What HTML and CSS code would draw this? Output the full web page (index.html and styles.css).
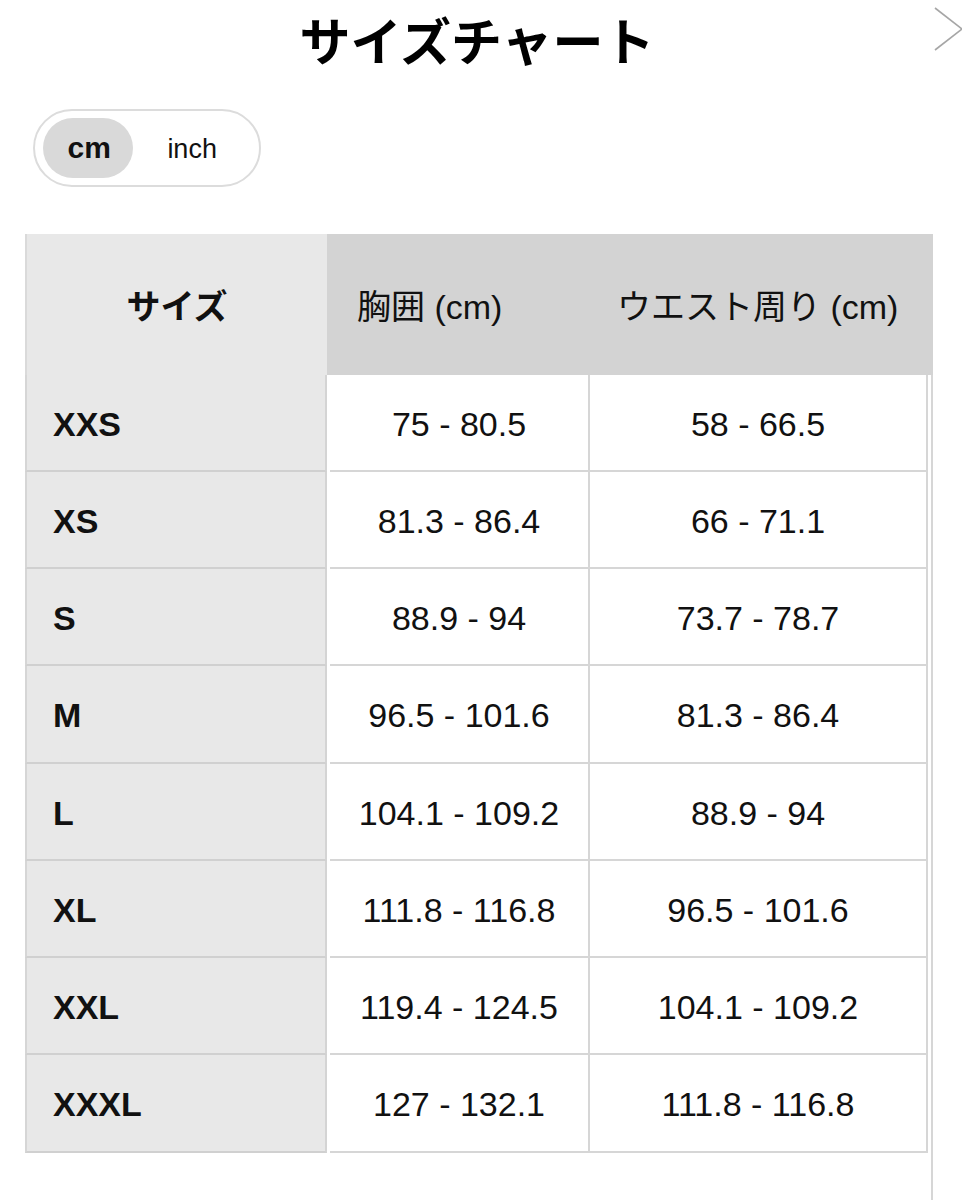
FILE: index.html
```html
<!DOCTYPE html>
<html lang="ja">
<head>
<meta charset="utf-8">
<title>サイズチャート</title>
<link rel="stylesheet" href="styles.css">
</head>
<body>
<div class="page">
  <h1 class="title">サイズチャート</h1>
  <svg class="close" width="56" height="44" viewBox="0 0 56 44" aria-label="閉じる">
    <line x1="1" y1="1" x2="55" y2="43" stroke="#a6a6a6" stroke-width="1.6"/>
    <line x1="1" y1="43" x2="55" y2="1" stroke="#a6a6a6" stroke-width="1.6"/>
  </svg>
  <div class="toggle">
    <span class="opt opt-cm active">cm</span>
    <span class="opt opt-inch">inch</span>
  </div>
  <div class="chart">
    <div class="head">
      <div class="h h-size">サイズ</div>
      <div class="h h-chest">胸囲 (cm)</div>
      <div class="h h-waist">ウエスト周り (cm)</div>
    </div>
    <div class="body">
      <div class="row"><div class="c c-size">XXS</div><div class="c c-chest">75 - 80.5</div><div class="c c-waist">58 - 66.5</div></div>
      <div class="row"><div class="c c-size">XS</div><div class="c c-chest">81.3 - 86.4</div><div class="c c-waist">66 - 71.1</div></div>
      <div class="row"><div class="c c-size">S</div><div class="c c-chest">88.9 - 94</div><div class="c c-waist">73.7 - 78.7</div></div>
      <div class="row"><div class="c c-size">M</div><div class="c c-chest">96.5 - 101.6</div><div class="c c-waist">81.3 - 86.4</div></div>
      <div class="row"><div class="c c-size">L</div><div class="c c-chest">104.1 - 109.2</div><div class="c c-waist">88.9 - 94</div></div>
      <div class="row"><div class="c c-size">XL</div><div class="c c-chest">111.8 - 116.8</div><div class="c c-waist">96.5 - 101.6</div></div>
      <div class="row"><div class="c c-size">XXL</div><div class="c c-chest">119.4 - 124.5</div><div class="c c-waist">104.1 - 109.2</div></div>
      <div class="row"><div class="c c-size">XXXL</div><div class="c c-chest">127 - 132.1</div><div class="c c-waist">111.8 - 116.8</div></div>
    </div>
  </div>
</div>
</body>
</html>
```
FILE: styles.css
```css
html, body {
  margin: 0;
  padding: 0;
  background: #fff;
  overflow: hidden;
}
body {
  font-family: "Liberation Sans", "Noto Sans CJK JP", sans-serif;
  color: #111;
}
.page {
  position: relative;
  width: 962px;
  height: 1200px;
  overflow: hidden;
}
.title {
  margin: 18px 8px 0 0;
  font-size: 51px;
  line-height: 51px;
  font-weight: 700;
  text-align: center;
  color: #000;
}
.close {
  position: absolute;
  left: 934px;
  top: 7px;
}
.toggle {
  display: flex;
  box-sizing: border-box;
  width: 228px;
  height: 78px;
  margin: 40px 0 0 33px;
  padding: 7px 8px;
  border: 2px solid #dcdcdc;
  border-radius: 39px;
}
.opt {
  display: flex;
  align-items: center;
  justify-content: center;
  height: 60px;
  border-radius: 30px;
  color: #111;
}
.opt-cm {
  width: 92px;
  font-size: 30px;
  font-weight: 700;
  padding-left: 2px;
  box-sizing: border-box;
}
.opt-inch {
  width: 120px;
  font-size: 27px;
  padding-top: 2px;
  box-sizing: border-box;
}
.opt.active {
  background: #d9d9d9;
}
.chart {
  margin: 47px 0 0 25px;
  width: 908px;
}
.head {
  display: flex;
  height: 141px;
}
.h {
  display: flex;
  align-items: center;
  box-sizing: border-box;
  font-size: 34px;
  background: #d3d3d3;
}
.h-size {
  width: 302px;
  justify-content: center;
  font-weight: 700;
  background: #e8e8e8;
  border-left: 2px solid #dadada;
}
.h-chest {
  width: 262px;
  padding-left: 30px;
}
.h-waist {
  width: 344px;
  padding-left: 28px;
}
.body {
  box-sizing: border-box;
  min-height: 825px;
  padding-right: 3px;
  border-right: 2px solid #d6d6d6;
}
.row {
  display: flex;
  height: 97px;
}
.row:nth-child(4n) {
  height: 98px;
}
.c {
  display: flex;
  align-items: center;
  justify-content: center;
  box-sizing: border-box;
  padding-top: 3px;
  font-size: 34px;
  border-bottom: 2px solid #d6d6d6;
}
.c-size {
  width: 302px;
  justify-content: flex-start;
  padding-left: 26px;
  font-weight: 700;
  background: #e8e8e8;
  border-left: 2px solid #d6d6d6;
  border-right: 2px solid #d4d4d4;
  border-bottom-color: #d0d0d0;
}
.c-chest {
  width: 260px;
  margin-left: 3px;
  border-right: 2px solid #d6d6d6;
}
.c-waist {
  width: 338px;
  border-right: 2px solid #d6d6d6;
}
```
